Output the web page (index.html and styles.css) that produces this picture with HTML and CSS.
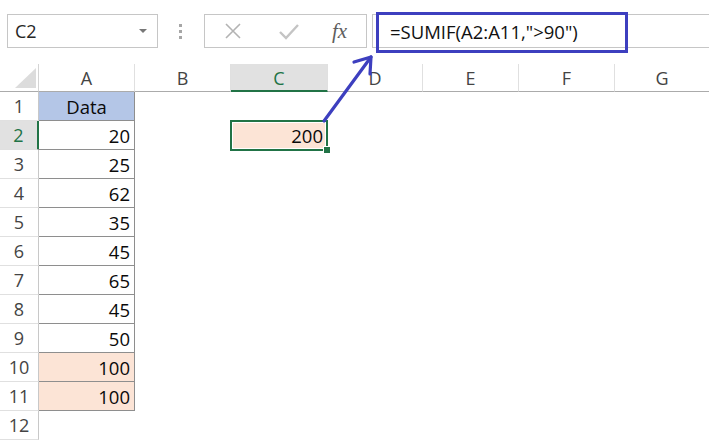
FILE: index.html
```html
<!DOCTYPE html>
<html>
<head>
<meta charset="utf-8">
<link rel="stylesheet" href="styles.css">
</head>
<body>
<div class="app">
  <div class="fbar">
    <div class="namebox"><span>C2</span><span class="caret"></span></div>
    <div class="dots"><i></i><i></i><i></i></div>
    <div class="fnbox">
      <svg class="ico ico-x" width="18" height="18" viewBox="0 0 18 18"><path d="M2 2L16 16M16 2L2 16" stroke="#b3b3b3" stroke-width="1.6" fill="none"/></svg>
      <svg class="ico ico-ok" width="22" height="18" viewBox="0 0 22 18"><path d="M2 10L8 16L20 3" stroke="#c4c4c4" stroke-width="2.4" fill="none"/></svg>
      <span class="fx">fx</span>
    </div>
    <div class="formula">=SUMIF(A2:A11,"&gt;90")</div>
  </div>

  <div class="sheet">
    <div class="corner"><span class="tri"></span></div>
    <div class="ch">A</div><div class="ch">B</div><div class="ch sel">C</div><div class="ch">D</div><div class="ch">E</div><div class="ch">F</div><div class="ch last">G</div>

    <div class="rh">1</div><div class="c a head">Data</div><div class="c"></div><div class="c"></div><div class="c"></div><div class="c"></div><div class="c"></div><div class="c"></div>
    <div class="rh sel">2</div><div class="c a selrow">20</div><div class="c"></div><div class="c selcell">200<span class="handle"></span></div><div class="c"></div><div class="c"></div><div class="c"></div><div class="c"></div>
    <div class="rh">3</div><div class="c a">25</div><div class="c"></div><div class="c"></div><div class="c"></div><div class="c"></div><div class="c"></div><div class="c"></div>
    <div class="rh">4</div><div class="c a">62</div><div class="c"></div><div class="c"></div><div class="c"></div><div class="c"></div><div class="c"></div><div class="c"></div>
    <div class="rh">5</div><div class="c a">35</div><div class="c"></div><div class="c"></div><div class="c"></div><div class="c"></div><div class="c"></div><div class="c"></div>
    <div class="rh">6</div><div class="c a">45</div><div class="c"></div><div class="c"></div><div class="c"></div><div class="c"></div><div class="c"></div><div class="c"></div>
    <div class="rh">7</div><div class="c a">65</div><div class="c"></div><div class="c"></div><div class="c"></div><div class="c"></div><div class="c"></div><div class="c"></div>
    <div class="rh">8</div><div class="c a">45</div><div class="c"></div><div class="c"></div><div class="c"></div><div class="c"></div><div class="c"></div><div class="c"></div>
    <div class="rh">9</div><div class="c a">50</div><div class="c"></div><div class="c"></div><div class="c"></div><div class="c"></div><div class="c"></div><div class="c"></div>
    <div class="rh">10</div><div class="c a hit">100</div><div class="c"></div><div class="c"></div><div class="c"></div><div class="c"></div><div class="c"></div><div class="c"></div>
    <div class="rh">11</div><div class="c a hit">100</div><div class="c"></div><div class="c"></div><div class="c"></div><div class="c"></div><div class="c"></div><div class="c"></div>
    <div class="rh">12</div><div class="c"></div><div class="c"></div><div class="c"></div><div class="c"></div><div class="c"></div><div class="c"></div><div class="c"></div>
  </div>

  <div class="callout"></div>
  <svg class="arrow" width="709" height="442" viewBox="0 0 709 442">
    <g stroke="#3d3fbf" stroke-width="3.2" fill="none" stroke-linecap="round" stroke-linejoin="round">
      <path d="M324 121L371 57"/>
      <path d="M354 62L371 57L370 74"/>
    </g>
  </svg>
</div>
</body>
</html>
```

FILE: styles.css
```css
html, body {
  margin: 0;
  padding: 0;
  background: #ffffff;
}
body {
  width: 709px;
  height: 442px;
  overflow: hidden;
  font-family: "Open Sans", "Noto Sans", "DejaVu Sans", sans-serif;
  color: #1e1e1e;
}
.app {
  position: relative;
  width: 709px;
  height: 442px;
  box-sizing: border-box;
  padding-top: 14px;
}

/* formula bar */
.fbar {
  display: flex;
  height: 34px;
}
.namebox {
  margin-left: 7px;
  width: 151px;
  box-sizing: border-box;
  border: 1px solid #c6c6c6;
  display: flex;
  align-items: center;
  justify-content: space-between;
  padding: 0 10px 0 7px;
  font-size: 18px;
  color: #262626;
}
.caret {
  width: 0;
  height: 0;
  border-left: 4px solid transparent;
  border-right: 4px solid transparent;
  border-top: 4px solid #777;
}
.dots {
  width: 44px;
  display: flex;
  flex-direction: column;
  align-items: center;
  justify-content: center;
  gap: 3px;
  margin-right: 2px;
}
.dots i {
  display: block;
  width: 3px;
  height: 3px;
  background: #a6a6a6;
}
.fnbox {
  width: 163px;
  box-sizing: border-box;
  border: 1px solid #c6c6c6;
  display: flex;
  align-items: center;
  padding-left: 19px;
}
.ico-x { margin-right: 36px; }
.ico-ok { margin-right: 32px; }
.fx {
  font-family: "Liberation Serif", "DejaVu Serif", serif;
  font-style: italic;
  font-size: 21px;
  color: #5e5e5e;
}
.formula {
  margin-left: 5px;
  flex: 1;
  border: 1px solid #c6c6c6;
  border-right: none;
  display: flex;
  align-items: center;
  padding-left: 17px;
  font-size: 18.5px;
  color: #111;
  white-space: nowrap;
}

/* sheet */
.sheet {
  margin-top: 16px;
  display: grid;
  grid-template-columns: 39px 96px 96px 97px 95px 96px 96px 1fr;
  grid-template-rows: 28px;
  grid-auto-rows: 29px;
  font-size: 18px;
}
.corner {
  box-sizing: border-box;
  border-right: 1px solid #d4d4d4;
  border-bottom: 1px solid #ababab;
  position: relative;
}
.tri {
  position: absolute;
  left: 15px;
  top: 4px;
  width: 21px;
  height: 20px;
  background: #dcdcdc;
  clip-path: polygon(100% 0, 100% 100%, 0 100%);
}
.ch {
  box-sizing: border-box;
  border-right: 1px solid #e0e0e0;
  border-bottom: 1px solid #ababab;
  display: flex;
  align-items: center;
  justify-content: center;
  color: #444;
  padding-top: 1px;
}
.ch.last { border-right: none; }
.ch.sel {
  background: #e1e1e1;
  border-bottom: 2px solid #217346;
  color: #217346;
}
.rh {
  box-sizing: border-box;
  border-right: 1px solid #c8c8c8;
  border-bottom: 1px solid #e0e0e0;
  display: flex;
  align-items: center;
  justify-content: center;
  color: #444;
}
.rh.sel {
  background: #e1e1e1;
  border-right: 2px solid #217346;
  color: #217346;
}
.c {
  box-sizing: border-box;
  display: flex;
  align-items: center;
  justify-content: flex-end;
  padding-right: 4px;
  color: #0a0a0a;
  font-size: 18.5px;
  position: relative;
}
.c.a {
  border-right: 1px solid #8e8e8e;
  border-bottom: 1px solid #8e8e8e;
}
.c.head {
  background: #b4c6e7;
  justify-content: center;
  padding-right: 0;
}
.c.hit {
  background: #fce4d6;
}
.c.selrow {
  margin-left: -1px;
}
.c.selcell {
  background: #fce4d6;
  border: 2px solid #217346;
  box-shadow: inset 0 0 0 1px #ffffff;
  margin: -1px 0 -1px -1px;
  padding-right: 3px;
}
.handle {
  position: absolute;
  right: -5px;
  bottom: -5px;
  width: 6px;
  height: 6px;
  background: #217346;
  border: 1px solid #ffffff;
}

/* annotation */
.callout {
  position: absolute;
  left: 376px;
  top: 12px;
  width: 252px;
  height: 41px;
  box-sizing: border-box;
  border: 3px solid #3d3fbf;
}
.arrow {
  position: absolute;
  left: 0;
  top: 0;
  pointer-events: none;
}
```
